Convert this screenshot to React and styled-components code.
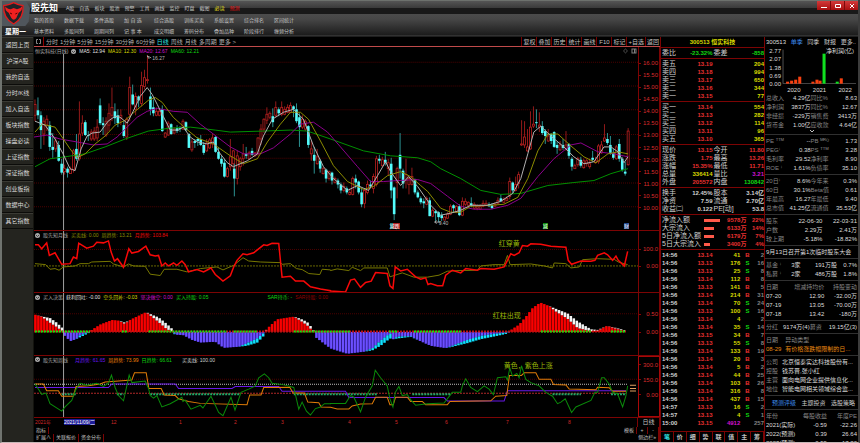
import React, { useState } from "react";
import styled, { createGlobalStyle } from "styled-components";

const GlobalStyle = createGlobalStyle`
  * {
    box-sizing: border-box;
  }

  body {
    margin: 0;
    background: #000000;
    color: #c0c0c0;
    font-family: "Liberation Sans", "Noto Sans CJK SC", sans-serif;
    font-size: 6px;
    line-height: 8px;
  }

  button {
    font: inherit;
    color: inherit;
    background: none;
    border: none;
    padding: 0;
    cursor: pointer;
    white-space: nowrap;
  }
`;

const Page = styled.div`
  height: 100vh;
  display: flex;
  flex-direction: column;
  overflow: hidden;
  border-left: 2px solid #70746f;
  border-right: 2px solid #3c3c3c;
  border-bottom: 1px solid #c8b8b8;
`;

const Header = styled.header`
  height: 37px;
  flex: none;
  display: flex;
  border-top: 1px solid #6d716d;
  background: linear-gradient(#555555 0, #3a3a3a 7px, #191919 7px, #191919 13px, #4c4c4c 13px, #474747 18px, #1c1c1c 34px, #3a3a3a 34px, #161616 36px);
`;

const Brand = styled.div`
  width: 32px;
  display: flex;
  flex-direction: column;
  justify-content: space-between;

  svg {
    display: block;
    width: 28px;
    height: 25px;
  }

  b {
    font-size: 7px;
    line-height: 11px;
    padding-left: 3px;
    color: #ffffff;
  }
`;

const Menus = styled.div`
  flex: 1;
`;

const MainMenu = styled.nav`
  display: flex;
  align-items: center;
  gap: 5px;
  height: 13px;
  font-size: 5px;

  h1 {
    margin: 0 3px 0 -3px;
    font-size: 9px;
    color: #ffffff;
    white-space: nowrap;
  }
`;

const MenuItem = styled.button`
  color: ${({ color }) => color || "#c8c8c8"};
`;

const SubMenu = styled.nav`
  display: grid;
  grid-template-columns: repeat(9, 30px);
  grid-auto-rows: 11px;
  font-size: 5px;
  color: #c4c4c4;

  button {
    text-align: left;
    white-space: pre;
  }
`;

const WindowButtons = styled.div`
  display: flex;
  height: 9px;
  margin-right: -1px;

  button {
    width: 14px;
    height: 9px;
    background: linear-gradient(#d23a3a, #a80f0f);
    border-right: 1px solid #7c0a0a;
    display: flex;
    align-items: center;
    justify-content: center;
  }
`;

const Body = styled.div`
  flex: 1;
  min-height: 0;
  display: flex;
`;

const Sidebar = styled.nav`
  width: 32px;
  flex: none;
  background: #24241f;
  display: flex;
  flex-direction: column;
  border-right: 1px solid #14140f;

  button {
    height: 16px;
    flex: none;
    color: #d8d8d8;
    border-top: 1px solid #3a3a34;
    border-bottom: 1px solid #0c0c0a;
  }
`;

const ChartColumn = styled.main`
  flex: 1;
  min-width: 0;
  display: flex;
  flex-direction: column;
  font-size: 5px;
`;

const Toolbar = styled.div`
  height: 10px;
  flex: none;
  display: flex;
  align-items: center;
  justify-content: space-between;
  border-bottom: 1px solid #c04a4a;
  font-size: 6px;
`;

const Periods = styled.div`
  display: flex;
  align-items: center;
  gap: 2px;
  padding-left: 2px;

  svg {
    width: 5px;
    height: 5px;
  }

  i {
    width: 1px;
    height: 9px;
    background: #900000;
  }
`;

const Period = styled.button`
  color: ${({ $active }) => ($active ? "#30e0e0" : "#b0b0b0")};
`;

const Tools = styled.div`
  display: flex;

  button {
    min-width: 15px;
    padding: 0 1px;
    height: 9px;
    border-left: 1px solid #780000;
  }
`;

const Panel = styled.section`
  flex: ${({ $grow }) => $grow} 1 0;
  min-height: 0;
  display: grid;
  grid-template-columns: 1fr 22px;
  grid-template-rows: 100%;
  border-bottom: 1px solid #7c0404;
`;

const Plot = styled.div`
  position: relative;
  min-height: 0;

  > svg {
    display: block;
    width: 100%;
    height: 100%;
  }
`;

const Legend = styled.div`
  position: absolute;
  top: 0;
  left: 1px;
  display: flex;
  align-items: center;
  gap: 3px;
  white-space: nowrap;

  svg {
    width: 5px;
    height: 5px;
  }
`;

const LegendText = styled.span`
  color: ${({ color }) => color};
  padding-left: ${({ $space }) => $space || 0}px;
`;

const Mark = styled.span`
  position: absolute;
  left: ${({ $left }) => $left}%;
  top: ${({ $top }) => $top}%;
  color: ${({ color }) => color || "#b8b8b8"};
  background: ${({ $bg }) => $bg || "none"};
  font-size: ${({ $size }) => $size || 5}px;
  line-height: ${({ $bg }) => ($bg ? 6 : 8)}px;
  white-space: nowrap;
`;

const Scale = styled.div`
  display: flex;
  flex-direction: column;
  justify-content: ${({ $gap }) => ($gap ? "flex-start" : "space-between")};
  gap: ${({ $gap }) => $gap || 0}px;
  padding: ${({ $top }) => $top}px 1px 19px 0;
  border-left: 1px solid #7c0404;
  border-right: 1px solid #7c0404;
  outline: ${({ $selected }) => ($selected ? "1px solid #a80808" : "none")};
  outline-offset: -1px;
  color: #d82c2c;
  font-size: 6px;
  line-height: 6px;

  span {
    display: flex;
    align-items: center;
    justify-content: space-between;
  }

  span::before {
    content: "";
    width: 2px;
    height: 1px;
    background: #900000;
  }
`;

const FooterRow = styled.div`
  height: ${({ $height }) => $height}px;
  flex: none;
  display: flex;
  justify-content: space-between;
  line-height: 7px;
  border-right: 1px solid #7c0404;
`;

const Timeline = styled.div`
  flex: 1;
  position: relative;
`;

const PeriodName = styled.span`
  width: 22px;
  font-size: 6px;
  line-height: 8px;
  text-align: center;
  border-left: 1px solid #7c0404;
`;

const FooterGroup = styled.div`
  display: flex;

  button {
    padding: 0 2px;
    border-right: 1px solid #7c0404;
    min-width: ${({ $min }) => $min || 0}px;
  }
`;

const Quote = styled.aside`
  width: 105px;
  flex: none;
  display: flex;
  flex-direction: column;
  font-weight: bold;
  border-left: 1px solid #7c0404;
  border-right: 1px solid #7c0404;

  h2 {
    margin: 0;
    height: 11px;
    font-size: 6px;
    line-height: 11px;
    color: #d8d800;
    text-align: center;
    border-bottom: 1px solid #7c0404;
  }
`;

const Block = styled.div`
  padding: 1px 0;
  border-bottom: 1px solid #7c0404;
  flex: ${({ $fill }) => ($fill ? "1" : "none")};
`;

const Table = styled.table`
  width: 100%;
  border-collapse: collapse;
  table-layout: fixed;

  td,
  th {
    height: ${({ $row }) => $row || 8}px;
    padding: 0;
    line-height: ${({ $row }) => $row || 8}px;
    text-align: right;
    white-space: nowrap;
    font-weight: inherit;
  }
`;

const Cell = styled.td`
  && {
    color: ${({ color }) => color || "#d0d0d0"};
    text-align: ${({ $left }) => ($left ? "left" : "right")};
    font-size: ${({ $label }) => ($label ? 7 : 6)}px;
    font-weight: ${({ $label }) => ($label ? "normal" : "inherit")};
    padding-left: ${({ $left }) => ($left ? 1 : 0)}px;
  }
`;

const FlowBar = styled.div`
  height: 3px;
  margin-left: 2px;
  background: #ff5a4a;
`;

const QuoteTabs = styled.div`
  height: 10px;
  display: grid;
  grid-template-columns: repeat(8, 1fr);

  button {
    border-right: 1px solid #7c0404;
  }

  button:first-child {
    color: #30e0e0;
  }
`;

const Info = styled.aside`
  width: 93px;
  flex: none;
  overflow: hidden;
  color: #dcdcdc;
`;

const InfoTabs = styled.div`
  display: flex;
  justify-content: space-between;
  height: 10px;
  line-height: 10px;
  padding: 0 2px 0 1px;
`;

const InfoTab = styled.button`
  color: ${({ $active }) => ($active ? "#3c8ae8" : "#c8c8c8")};
`;

const Profit = styled.div`
  display: grid;
  grid-template-columns: 16px 1fr;
  height: 45px;
  position: relative;
  line-height: 6px;

  > svg {
    width: 100%;
    height: 37px;
    display: block;
  }

  em {
    position: absolute;
    top: 1px;
    right: 4px;
    font-style: normal;
  }
`;

const ProfitScale = styled.div`
  display: flex;
  flex-direction: column;
  justify-content: space-between;
  text-align: right;
  height: 40px;
  padding-top: 1px;
`;

const Years = styled.div`
  grid-column: 2;
  display: flex;
  justify-content: space-around;
  font-size: 6px;
`;

const InfoBlock = styled.div`
  padding: 2px 1px 1px 1px;
  border-bottom: 1px solid #303030;
  line-height: 9px;

  p {
    margin: 0;
    white-space: nowrap;
  }
`;

const InfoRow = styled.tr`
  td {
    color: ${({ color }) => color || "#dcdcdc"};
  }

  && th {
    color: #848484;
    text-align: ${({ $head }) => ($head ? "right" : "left")};
  }

  && > :first-child {
    text-align: left;
  }
`;

const Fact = styled.p`
  color: ${({ color }) => color || "#dcdcdc"};

  span {
    color: ${({ color }) => color || "#848484"};
    margin-right: 4px;
  }
`;

const More = styled.button`
  && {
    display: block;
    width: 100%;
    height: 3px;
    line-height: 3px;
  }

  svg {
    display: block;
    margin: 0 auto;
  }
`;

const RED = "#e83030";
const GREEN = "#10d810";
const YELLOW = "#d8d800";
const PINK = "#d010d0";
const PITCH = 2.955;

// Each candle: direction, high, body top, body bottom, low
const candleRuns = [
  {
    x: 35,
    data: "r100,105,116,122 c98,111,116,120 c112,116,131,150 r118,122,135,146 r116,120,126,132 c122,126,148,152 c134,148,151,159 r138,142,150,153 c142,146,162,163 c160,165,174,176 r166,170,173,176 c168,170,174,179 r168,171,175,175 r150,152,171,174 c135,150,160,162 r102,135,160,162 r116,124,134,137 c121,123,136,137 c132,136,137,142 r130,133,140,142 r128,132,140,142 r120,128,139,142 c99,106,124,126 c118,124,126,136 r118,122,136,138 r104,114,126,132 r88,108,116,122 c104,112,119,125 c110,116,124,128 r110,116,119,126 c122,126,137,139 r118,120,138,141 r77,88,115,122 c85,95,105,106 r93,97,110,116 c96,97,101,108 r72,86,104,107 r70,78,87,90 r55,80,81,84 c88,97,110,116 c100,108,114,117 r108,112,116,117 r109,112,116,117 c106,110,132,133 r133,134,138,139 r122,124,136,137 c124,125,135,136 r128,130,134,135 c126,129,132,134 c127,129,130,133 r120,122,130,131 c122,123,131,132 c134,135,149,149 r140,143,151,153 c140,142,144,149 c138,140,142,147 c136,140,146,147 c143,146,154,156 r140,144,152,153 r139,141,149,150 r135,139,145,149 c137,138,153,154 c148,153,160,161 c157,160,165,168 c160,164,178,179 r168,170,178,179 r140,158,168,172 r151,152,165,174",
  },
  {
    x: 234,
    data: "c165,170,180,198 r152,157,180,186 r158,160,168,172 r145,155,160,167 c148,155,157,160 r152,154,160,161 c149,152,156,157 r153,154,157,158 r138,139,155,157 r125,130,140,146 r119,120,130,134 r108,115,121,125 r112,114,118,120 c109,117,123,128 r102,108,116,118 c108,110,114,117 r102,108,115,117 r107,110,115,116 r105,108,113,114 r103,106,113,114 c106,107,110,118 c104,110,122,124 c114,118,128,148 r116,120,128,130 r120,122,130,132 c126,127,146,149 r142,150,155,162 c148,156,162,175 r150,158,165,166 c160,162,170,174 r168,170,175,176 c170,171,180,184 r172,173,180,182 c173,174,182,186 r178,180,184,185 c180,182,186,190 c184,186,192,195 r184,188,192,194 c188,190,194,196 r190,194,196,197 r178,180,196,197 c176,180,184,190 c182,183,194,196 c190,194,206,209 r190,192,205,210 r182,186,194,196 c182,186,188,190 r175,178,190,195 r157,160,186,188 c156,160,162,165 r158,161,167,168 c153,161,164,167 r160,164,170,177 c159,165,192,200 c188,189,216,222 r168,170,184,200 c134,156,170,180 c170,172,185,190 r160,176,182,190 r178,180,186,196 r169,178,186,187 c180,181,194,196 c192,194,199,200 c198,200,204,206 c200,203,205,210 r198,200,206,207 c199,202,218,218 r210,212,218,219 c212,213,215,223 c213,214,219,224",
  },
  {
    x: 441,
    data: "c214,217,220,223 r218,219,222,222 r214,216,220,221 r206,208,216,217 c206,207,210,214 r207,208,214,215 c206,208,217,218 r199,203,217,218 r200,203,206,208 r203,204,207,208 c199,205,207,209 r204,206,210,211 r206,208,210,212 r206,208,211,211 r202,205,208,209 r202,205,207,208 c204,206,208,209 c205,207,210,211 r204,206,208,209 r199,202,205,206 c196,200,203,204 r199,201,204,205 r198,200,202,203 r179,183,198,201 c183,184,192,195 r178,186,192,193 r173,176,185,190 r121,145,146,147 r122,138,146,149 r130,148,152,153 r112,128,150,151 r107,125,127,129 c110,123,124,129 r113,126,128,133 c122,127,134,136 c130,132,137,145 r130,137,142,143 c134,135,142,145 c132,133,148,149 c143,146,149,155 r142,146,151,152 c140,146,149,151 r132,146,150,152 c144,145,157,160 c158,160,168,172 r165,167,170,170 r158,160,166,168 c158,161,167,169 r160,162,169,170 r160,162,165,168 r160,165,168,170 c152,159,161,163 r158,162,164,165 r145,147,163,165 r142,146,154,155 r125,139,142,143 c134,140,144,146 c137,146,154,156 c150,154,159,161 r146,148,160,161 c140,145,160,163 c158,160,171,173 c163,173,175,177 r129,132,166,167",
  },
];

const candles = candleRuns.flatMap(({ x, data }) =>
  data.split(" ").map((item, i) => {
    const [high, top, bottom, low] = item.slice(1).split(",").map(Number);
    return { x: x + i * PITCH, up: item[0] === "r", high, top, bottom, low };
  })
);

const averages = [
  ["#009000", "35,168 50,160 65,158 85,155 105,148 125,140 148,132 170,129 190,128 215,131 230,133 262,132 290,131 307,132 330,140 363,152 390,157 417,159 430,163 440,170 460,180 480,192 500,196 520,195 547,187 573,184 593,182 610,175 627,170"],
  ["#8c008c", "34,138 47,136 60,140 77,143 93,146 107,145 117,138 127,128 137,118 147,112 157,109 173,112 187,113 200,125 217,138 230,148 243,155 260,155 273,149 290,135 300,125 313,123 327,133 340,148 357,168 370,183 383,183 397,182 417,181 430,185 447,198 460,208 473,211 490,211 507,207 520,200 537,178 553,160 570,146 580,144 597,153 613,155 627,158"],
  ["#8c8c00", "35,133 42,125 55,128 62,138 70,150 77,159 85,155 95,145 105,137 115,126 125,121 135,112 148,101 155,98 162,103 173,118 185,129 197,139 213,145 230,157 243,165 257,160 267,143 280,125 290,113 300,113 308,120 320,142 333,167 347,183 363,191 373,188 387,177 400,173 410,178 420,187 427,193 440,210 450,214 460,214 470,208 490,207 503,206 517,199 527,180 537,152 547,135 557,135 570,147 583,158 595,164 607,155 617,153 627,155"],
  ["#b0b0b0", "35,122 45,126 55,140 63,155 70,170 75,172 81,150 87,137 92,134 100,133 108,122 115,117 120,118 127,124 133,112 140,97 147,88 152,95 157,105 163,117 170,131 178,131 183,128 190,138 197,143 207,145 213,143 220,155 227,164 233,168 247,162 257,155 263,137 272,120 283,113 293,110 303,120 313,147 323,168 333,180 347,192 357,187 368,192 377,177 385,163 390,173 400,187 408,178 417,188 430,207 440,217 450,215 460,212 470,207 487,207 500,203 512,195 520,180 527,155 533,133 540,127 550,137 563,148 573,158 583,165 593,163 603,148 610,148 617,153 623,164 627,158"],
];

// Indicator series come in two halves, the second one starts at 990
const join = (first, second) =>
  first +
  " " +
  second
    .split(" ")
    .map((p) => {
      const [x, y] = p.split(",");
      return `${Number(x) + 990},${y}`;
    })
    .join(" ");

const monthRed = join(
  "105,48 115,48 125,60 140,42 148,80 165,72 175,90 185,107 210,105 220,85 230,90 236,43 260,58 280,52 290,40 310,42 325,36 333,70 343,97 352,90 370,116 386,60 395,73 415,68 437,52 450,78 465,82 475,80 485,112 495,103 505,112 520,103 530,110 545,97 555,108 565,130 590,123 610,130 625,122 632,118 645,138 657,148 668,158 690,142 700,115 710,95 728,75 740,78 760,72 790,48 800,50 815,43 835,44 845,146 870,143 885,158 910,158 930,175 960,182 990,187",
  "0,188 45,191 60,155 72,152 90,177 105,162 122,158 135,132 170,135 178,172 187,180 194,115 210,127 230,122 255,145 270,152 285,148 292,168 300,165 320,172 336,172 345,140 365,125 390,133 405,120 440,125 450,120 490,122 520,115 530,95 540,75 550,80 565,72 575,50 590,52 600,45 630,46 660,52 705,55 712,95 722,107 750,97 780,98 792,95 800,80 820,72 830,78 845,95 855,82 862,95 880,112 890,68"
);

const monthYellow = join(
  "105,105 137,108 150,122 165,120 177,125 190,115 225,112 240,105 265,105 275,100 330,98 340,106 370,115 385,106 400,112 435,113 450,137 480,141 492,122 530,122 560,130 600,120 650,115 668,124 700,110 728,87 745,97 780,100 840,102 845,107 870,105 888,120 905,123 925,135 958,138 965,122 990,124",
  "0,126 20,121 55,126 65,116 90,126 100,118 170,118 178,145 215,133 250,146 290,146 325,140 350,128 385,126 440,125 450,112 490,108 520,108 530,80 538,108 600,106 640,112 665,118 670,103 705,105 720,118 745,115 755,93 800,90 850,92 862,100 890,108"
);

const weekOrange = join(
  "105,464 130,464 140,485 175,485 185,502 220,502 228,472 265,470 300,464 315,458 395,452 403,430 438,430 446,478 483,478 492,498 525,500 535,510 565,518 600,524 740,528 748,498 782,498 790,475 868,474 878,492 912,492 922,520 955,522 962,535 990,536",
  "0,536 20,541 55,541 65,532 90,526 125,525 135,505 170,505 178,528 188,528 195,505 230,505 240,518 275,518 285,528 350,528 358,518 480,516 495,502 528,500 536,438 572,438 580,430 615,430 625,450 660,450 668,466 705,467 715,480 795,482 800,474 835,476 845,487 885,487"
);

const weekPurple = join(
  "105,475 325,475 335,464 525,464 535,478 695,478 705,472 835,472 845,487 990,487",
  "0,487 45,487 55,506 340,506 350,517 520,517 530,485 885,485"
);

const weekGreen = join(
  "105,464 115,480 125,496 138,492 150,525 185,548 195,535 215,515 228,480 240,462 260,468 290,462 310,472 325,462 334,437 345,475 355,500 370,516 380,470 387,437 395,460 435,455 445,478 450,500 460,508 470,500 485,535 510,525 545,505 548,518 555,514 572,542 600,530 608,538 632,502 645,530 655,552 668,562 692,505 704,545 722,490 745,480 765,470 775,445 792,433 805,445 815,462 850,467 880,475 895,542 905,520 918,548 930,560 945,540 960,535 972,525 990,525",
  "0,524 45,524 60,500 70,505 90,550 105,505 125,470 134,422 150,445 170,470 178,510 187,535 194,490 205,472 215,500 230,497 242,515 255,530 290,525 340,523 365,490 390,490 395,470 405,448 420,475 440,488 460,470 475,480 488,497 500,445 525,442 530,452 537,415 545,440 558,432 565,445 572,408 585,450 600,460 625,470 645,490 665,502 680,525 690,520 703,510 722,552 735,535 780,515 792,490 800,490 812,445 820,445 835,465 845,490 860,495 875,535 885,500 890,470"
);

// x, body height, tip height (negative below the zero line)
const waves = [
  [105, 52, 52], [125, 46, 47], [150, 28, 42], [170, 15, 28], [187, 2, 12], [193, -10, -10], [210, -28, -28],
  [228, -22, -22], [240, -10, -16], [265, -1, -4], [275, 6, 6], [300, 22, 22], [335, 36, 36], [355, 34, 34],
  [375, 24, 28], [385, 34, 34], [438, 60, 60], [455, 46, 52], [475, 30, 44], [500, 8, 24], [518, 1, 7],
  [525, -8, -8], [550, -10, -10], [575, -24, -24], [600, -32, -32], [645, -30, -30], [670, -48, -48],
  [715, -45, -45], [740, -34, -42], [770, -20, -33], [792, -2, -10], [798, 8, 8], [830, 38, 38], [880, 46, 46],
  [900, 34, 40], [920, 20, 30], [938, 2, 8], [945, -16, -16], [990, -50, -50], [1040, -66, -66],
  [1090, -60, -60], [1115, -50, -56], [1140, -26, -42], [1168, -4, -20], [1178, -22, -22], [1190, -14, -20],
  [1230, -13, -15], [1255, -26, -26], [1290, -42, -42], [1335, -49, -49], [1355, -42, -45], [1400, -24, -34],
  [1440, -12, -22], [1480, -6, -14], [1520, -1, -5], [1528, 4, 4], [1555, 22, 22], [1575, 46, 46],
  [1595, 72, 72], [1618, 89, 89], [1645, 78, 78], [1665, 62, 70], [1700, 40, 56], [1730, 12, 32],
  [1770, 2, 8], [1790, 4, 6], [1818, 18, 18], [1845, 10, 12], [1875, 2, 4],
];

const greenDots = [[105, 270], [365, 380], [445, 680], [700, 770], [880, 1050], [1165, 1190], [1240, 1380], [1620, 1770], [1830, 1875]];

const bars = [];
for (let x = 106; x < 1876; x += 8.86) {
  let k = waves.findIndex((w) => w[0] > x);
  if (k < 1) k = k === 0 ? 1 : waves.length - 1;
  const [x0, b0, t0] = waves[k - 1];
  const [x1, b1, t1] = waves[k];
  const f = (x - x0) / (x1 - x0);
  bars.push({ x, body: b0 + (b1 - b0) * f, tip: t0 + (t1 - t0) * f });
}

const Line = ({ points, color, width = 1 }) => (
  <polyline points={points} fill="none" stroke={color} strokeWidth={width} vectorEffect="non-scaling-stroke" />
);

const Level = ({ y, color, dash = "1 1", from = 102, to = 1911, width = 1 }) => (
  <path d={`M${from} ${y}H${to}`} stroke={color} strokeWidth={width} strokeDasharray={dash} vectorEffect="non-scaling-stroke" />
);

const Cursor = () => <path d="M190.5 0V600" stroke="#a0a0a0" vectorEffect="non-scaling-stroke" />;

const Dot = () => (
  <svg viewBox="0 0 10 10">
    <circle cx="5" cy="5" r="5" fill="#a8a8a8" />
    <path d="M2 4l3 3 3-3" stroke="#202020" strokeWidth="1.5" fill="none" />
  </svg>
);

const PriceChart = () => (
  <svg viewBox="34 47 603 185" preserveAspectRatio="none">
    {[63, 87, 111, 136, 160, 185, 209].map((y) => (
      <path key={y} d={`M34 ${y - 0.5}H637`} stroke="#4c0000" strokeDasharray="1 1" />
    ))}
    <path d="M63.5 54V232" stroke="#a0a0a0" />
    {candles.map((c) =>
      c.up ? (
        <g key={c.x} stroke="#b82020" strokeWidth="0.8" fill="#000000">
          <path d={`M${c.x} ${c.high}V${c.low}`} />
          <rect x={c.x - 1} y={c.top} width="2" height={Math.max(c.bottom - c.top, 0.5)} />
        </g>
      ) : (
        <g key={c.x} fill="#54fcfc">
          <path d={`M${c.x} ${c.high}V${c.low}`} stroke="#38b8b8" strokeWidth="0.8" />
          <rect x={c.x - 1.3} y={c.top} width="2.6" height={Math.max(c.bottom - c.top, 1)} />
        </g>
      )
    )}
    {averages.map(([color, points]) => (
      <Line key={color} color={color} points={points} />
    ))}
    <path d="M147 56l4 2M147 56l2 3M434 224h6M434 224l2 -1.500M434 224l2 1.500" stroke="#c0c0c0" fill="none" strokeWidth="0.8" />
    <path d="M624.500 49l2 2-2 2-2-2z" stroke="#707070" fill="none" strokeWidth="0.7" />
    <path d="M631 49h4v4h-4zM633.500 49v4" stroke="#808080" fill="none" />
  </svg>
);

const WaveChart = () => (
  <svg viewBox="102 192 1809 186" preserveAspectRatio="none">
    <Level y={255} color="#4c0000" />
    {bars.map(({ x, body, tip }) => {
      const up = tip > 0;
      const bodyY = up ? 310 - body : 310;
      const tipY = up ? 310 - tip : 310 - body;
      return (
        <g key={x}>
          <rect x={x - 4} y={bodyY} width="8.800" height={Math.abs(body)} fill={up ? "#a00000" : "#3a22b0"} />
          <rect x={x - 3} y={bodyY} width="6" height={Math.abs(body)} fill={up ? "#fa0000" : "#6c50ff"} />
          <rect x={x - 3.5} y={tipY} width="7.500" height={Math.abs(tip - body)} fill={up ? "#f4f4f4" : "#10e0ff"} />
        </g>
      );
    })}
    <Level y={309} color="#c01010" dash="2 1" to={1875} width={2} />
    {greenDots.map(([from, to]) => (
      <Level key={from} y={309} color="#10e810" dash="2 1" from={from} to={to} width={2} />
    ))}
    <Cursor />
  </svg>
);

const at = (px) => ((px - 34) / 603) * 100;

const sections = [
  "返回上页", "沪深A股", "我的自选", "分时/K线", "加入自选", "板块指数",
  "操盘必读", "上证指数", "深证指数", "创业板指", "数据中心", "其它指数",
];
const mainMenu = ["A股", "自选", "板块", "股池", "预警", "工具", "画线", "监控", "盯盘", "截图"];
const subMenu = [
  "我的首页", "数据下载", "条件选股", "加 自 选", "综合选股", "训练买卖", "系统设置", "综合排名", "区间统计",
  "基本资料", "多股同列", "周期同列", "记 事 本", "成交明细", "筹码分布", "叠加品种", "阶段排行", "缠频分析",
];
const periods = ["分时", "1分钟", "5分钟", "15分钟", "30分钟", "60分钟", "日线", "周线", "月线", "多周期", "更多 >"];
const tools = ["复权", "叠加", "历史", "统计", "画线", "F10", "标记", "+自选", "返回"];
const months = [["12", 111], ["1", 179], ["2", 234], ["3", 281], ["4", 348], ["5", 395], ["6", 445], ["7", 506], ["8", 568]];

const sells = [["卖五", "13.19", 204], ["卖四", "13.18", 994], ["卖三", "13.17", 650], ["卖二", "13.16", 344], ["卖一", "13.15", 77]];
const buys = [["买一", "13.14", 554], ["买二", "13.13", 282], ["买三", "13.12", 114], ["买四", "13.11", 96], ["买五", "13.10", 365]];
const prices = [
  ["现价", "13.15", "今开", "11.80", RED, RED],
  ["涨跌", "1.75", "最高", "13.26", RED, RED],
  ["涨幅", "15.35%", "最低", "11.71", RED, RED],
  ["总量", "336414", "量比", "3.21", YELLOW, PINK],
  ["外盘", "205572", "内盘", "130842", RED, GREEN],
];
const shares = [
  ["换手", "12.45%", "股本", "3.14亿"],
  ["净资", "7.59", "流通", "2.70亿"],
  ["收益㈡", "0.122", "PE[动]", "53.8"],
];
const flows = [
  ["净流入额", 78, "9578万", "22%"],
  ["大宗流入", 50, "6133万", "14%"],
  ["5日净流入额", 50, "6179万", "7%"],
  ["5日大宗流入", 30, "3400万", "4%"],
];
const ticks = [
  ["14:56", "13.14", 41, "B", 2], ["14:56", "13.13", 176, "S", 16], ["14:56", "13.13", 25, "S", 8],
  ["14:56", "13.14", 112, "B", 8], ["14:56", "13.13", 141, "B", 5], ["14:56", "13.14", 214, "B", 31],
  ["14:56", "13.14", 70, "S", 24], ["14:56", "13.13", 100, "S", 16], ["14:56", "13.14", 4, "", 2],
  ["14:56", "13.14", 35, "S", 14], ["14:56", "13.15", 34, "B", 7], ["14:56", "13.13", 55, "S", 8],
  ["14:56", "13.14", 133, "B", 19], ["14:56", "13.14", 20, "B", 3], ["14:56", "13.14", 5, "B", 2],
  ["14:56", "13.14", 44, "B", 25], ["14:56", "13.14", 103, "B", 26], ["14:56", "13.14", 316, "B", 8],
  ["14:56", "13.14", 437, "B", 15], ["14:57", "13.13", 16, "S", 2], ["14:57", "13.13", 4, "S", 1],
  ["15:00", "13.15", 4912, "", 257],
];

const profits = [
  [3, 6], [7, 9], [11, 12], [15, 21], [28, 6], [32, 12], [35, 9], [39, 90, true], [52, 6, true], [56, 16],
];

const Widths = ({ of }) => (
  <colgroup>
    {of.map((w, i) => (
      <col key={i} width={`${w}%`} />
    ))}
  </colgroup>
);

const PairTable = ({ rows }) => (
  <Table>
    <Widths of={[22, 28, 17, 33]} />
    <tbody>
      {rows.map(([a, av, b, bv, ac, bc]) => (
        <tr key={a}>
          <Cell $label $left>{a}</Cell>
          <Cell color={ac}>{av}</Cell>
          <Cell $label $left>{b}</Cell>
          <Cell color={bc}>{bv}</Cell>
        </tr>
      ))}
    </tbody>
  </Table>
);

const OrderTable = ({ rows }) => (
  <Table>
    <Widths of={[16, 34, 50]} />
    <tbody>
      {rows.map(([name, price, volume]) => (
        <tr key={name}>
          <Cell $label $left>{name}</Cell>
          <Cell color={RED}>{price}</Cell>
          <Cell color={YELLOW}>{volume}</Cell>
        </tr>
      ))}
    </tbody>
  </Table>
);

const FactTable = ({ rows, widths = [22, 27, 22, 29] }) => (
  <Table $row={9}>
    <Widths of={widths} />
    <tbody>
      {rows.map(([a, av, b, bv]) => (
        <InfoRow key={a}>
          <th>{a}</th>
          <td>{av}</td>
          <th>{b}</th>
          <td>{bv}</td>
        </InfoRow>
      ))}
    </tbody>
  </Table>
);

const ListTable = ({ head, rows, widths = [30, 34, 36] }) => (
  <Table $row={9}>
    <Widths of={widths} />
    <tbody>
      {head && (
        <InfoRow $head>
          {head.map((h) => (
            <th key={h}>{h}</th>
          ))}
        </InfoRow>
      )}
      {rows.map((row) => (
        <InfoRow key={row[0]}>
          {row.map((cell, i) => (head || i ? <td key={i}>{cell}</td> : <th key={i}>{cell}</th>))}
        </InfoRow>
      ))}
    </tbody>
  </Table>
);

const App = () => {
  const [period, setPeriod] = useState("日线");

  return (
    <Page>
      <GlobalStyle />
      <Header>
        <Brand>
          <svg viewBox="0 0 84 75">
            <path d="M0 0H72L84 22 80 62 70 75H0z" fill="#50565c" />
            <path d="M5 14Q20 13 35 5Q50 13 63 14Q66 52 35 69Q3 52 5 14z" fill="#202428" stroke="#e01c1c" strokeWidth="4" />
            <path d="M10 16Q14 24 26 25L35 21 45 25Q56 24 60 16Q62 30 50 35L43 51Q35 61 28 51L20 35Q8 30 10 16z" fill="#f02020" />
            <path d="M24 36l6 3M46 36l-6 3" stroke="#500000" strokeWidth="3" />
          </svg>
          <b>星期一</b>
        </Brand>
        <Menus>
          <MainMenu>
            <h1>股先知</h1>
            {mainMenu.map((item) => (
              <MenuItem key={item}>{item}</MenuItem>
            ))}
            <MenuItem color="#f0e020">必读</MenuItem>
            <MenuItem color="#e01010">预测</MenuItem>
          </MainMenu>
          <SubMenu>
            {subMenu.map((item) => (
              <button key={item}>{item}</button>
            ))}
          </SubMenu>
        </Menus>
        <WindowButtons>
          <button aria-label="最小化">
            <svg width="6" height="6" viewBox="0 0 6 6"><path d="M0 4.500h6" stroke="#fff" /></svg>
          </button>
          <button aria-label="还原">
            <svg width="6" height="6" viewBox="0 0 6 6"><path d="M.5 1.500h5v3h-5z" stroke="#fff" fill="none" /></svg>
          </button>
          <button aria-label="关闭">
            <svg width="6" height="6" viewBox="0 0 6 6"><path d="M1 1l4 4M5 1l-4 4" stroke="#fff" /></svg>
          </button>
        </WindowButtons>
      </Header>

      <Body>
        <Sidebar>
          {sections.map((item) => (
            <button key={item}>{item}</button>
          ))}
        </Sidebar>

        <ChartColumn>
          <Toolbar>
            <Periods>
              <svg viewBox="0 0 10 10"><path d="M4 1H1V9H4M6 1H9V9H6" stroke="#b0b0b0" strokeWidth="1.5" fill="none" /></svg>
              <i />
              {periods.map((item) => (
                <Period key={item} $active={item === period} onClick={() => setPeriod(item)}>
                  {item}
                </Period>
              ))}
            </Periods>
            <Tools>
              {tools.map((item) => (
                <button key={item}>{item}</button>
              ))}
            </Tools>
          </Toolbar>

          <Panel $grow={185}>
            <Plot>
              <PriceChart />
              <Legend>
                <LegendText color="#b0b0b0">恒实科技(日线)</LegendText>
                <Dot />
                <LegendText color="#e0e0e0">MA5: 12.94</LegendText>
                <LegendText color={YELLOW}>MA10: 12.30</LegendText>
                <LegendText color={PINK}>MA20: 12.67</LegendText>
                <LegendText color={GREEN}>MA60: 12.21</LegendText>
              </Legend>
              <Mark $left={at(152)} $top={4}>16.27</Mark>
              <Mark $left={at(438)} $top={94}>9.40</Mark>
              <Mark $left={at(389)} $top={96} $bg="linear-gradient(90deg, #208080 50%, #b02020 50%)" color="#ffffff">减</Mark>
              <Mark $left={at(394)} $top={96} $bg="#a82020" color="#ffffff">跌</Mark>
              <Mark $left={at(542)} $top={96} $bg="#109010" color="#ffffff">减</Mark>
              <Mark $left={at(623)} $top={96} $bg="#204890" color="#ffffff">财</Mark>
            </Plot>
            <Scale $top={13}>
              {Array.from({ length: 13 }, (_, i) => (
                <span key={i}>{(16 - i / 2).toFixed(2)}</span>
              ))}
            </Scale>
          </Panel>

          <Panel $grow={62}>
            <Plot>
              <svg viewBox="102 6 1809 186" preserveAspectRatio="none">
                <Level y={62} color="#4c0000" />
                <Level y={112} color="#686800" dash="2 1" />
                <Cursor />
                <Line points={monthYellow} color="#787800" />
                <Line points={monthRed} color="#f80808" width={1.5} />
              </svg>
              <Legend>
                <Dot />
                <LegendText color="#a0a0a0">股先知月线</LegendText>
                <LegendText color="#8c8c00">买卖线: 0.00</LegendText>
                <LegendText color="#8c8c00">周趋势: 13.21</LegendText>
                <LegendText color="#f00808">月趋势: 103.84</LegendText>
              </Legend>
              <Mark $left={at(498)} $top={15} $size={7} color="#98b808">红穿黄</Mark>
            </Plot>
            <Scale $top={15} $gap={11}>
              <span>100.0</span>
              <span>0.00</span>
            </Scale>
          </Panel>

          <Panel $grow={62}>
            <Plot>
              <WaveChart />
              <Legend>
                <Dot />
                <LegendText color="#a0a0a0">买入决策</LegendText>
                <LegendText color="#e0e0e0">获利回吐: -0.00</LegendText>
                <LegendText color={YELLOW}>空头回补: -0.03</LegendText>
                <LegendText color={PINK}>坚决做空: 0.00</LegendText>
                <LegendText color={GREEN}>买入持股: 0.05</LegendText>
                <LegendText color={GREEN} $space={56}>SAR持币: -</LegendText>
                <LegendText color="#900000">SAR持股: 0.00</LegendText>
              </Legend>
              <Mark $left={at(492)} $top={30} $size={7} color="#98b808">红柱出现</Mark>
            </Plot>
            <Scale $top={18} $gap={12}>
              <span>0.50</span>
              <span>0.00</span>
            </Scale>
          </Panel>

          <Panel $grow={62}>
            <Plot>
              <svg viewBox="102 378 1809 189" preserveAspectRatio="none">
                <Level y={450} color="#4c0000" />
                <Level y={465} color="#c0c0c0" dash="1 1" to={1880} />
                <Level y={493} color="#b02828" dash="2 1" to={1875} />
                {[[185, 230], [350, 370], [450, 720], [880, 1130], [1235, 1350], [1655, 1740], [1830, 1875]].map(([from, to]) => (
                  <Level key={from} y={496} color="#20a868" dash="2 1" from={from} to={to} width={2} />
                ))}
                <Cursor />
                <Line points={weekPurple} color="#6818e8" />
                <Line points={weekOrange} color="#e07c08" />
                <Line points={weekGreen} color="#0a8a0a" />
                <path d="M1887 468h18M1887 478h18M1887 486h18" stroke="#e0a060" vectorEffect="non-scaling-stroke" />
              </svg>
              <Legend>
                <Dot />
                <LegendText color="#a0a0a0">股先知周线</LegendText>
                <LegendText color="#6a18f0" $space={4}>月趋势: 61.65</LegendText>
                <LegendText color="#f08008">周趋势: 73.99</LegendText>
                <LegendText color={GREEN}>日趋势: 66.61</LegendText>
                <LegendText color="#d0d0d0" $space={7}>买卖线: 100.00</LegendText>
              </Legend>
              <Mark $left={at(503)} $top={10} $size={7} color="#98b808">黄色，紫色上涨</Mark>
            </Plot>
            <Scale $top={6} $gap={9} $selected>
              <span>300.0</span>
              <span>150.0</span>
              <span>0.00</span>
            </Scale>
          </Panel>

          <FooterRow $height={9}>
            <Timeline>
              <Mark $left={at(35)} $top={0} color="#d02828">2021年</Mark>
              <Mark $left={at(64)} $top={10} color="#ffffff" $bg="#1c1c98">2021/11/09/二</Mark>
              {months.map(([label, x]) => (
                <Mark key={label} $left={at(x)} $top={0} color="#d02828">{label}</Mark>
              ))}
            </Timeline>
            <PeriodName>日线</PeriodName>
          </FooterRow>
          <FooterRow $height={7}>
            <FooterGroup><button>指标</button></FooterGroup>
            <FooterGroup $min={11}>
              <button>模板</button>
              <button aria-label="放大">+</button>
              <button aria-label="缩小">-</button>
            </FooterGroup>
          </FooterRow>
          <FooterRow $height={8}>
            <FooterGroup>
              <button>扩展∧</button>
              <button>关联报价</button>
              <button>资金分布</button>
            </FooterGroup>
            <FooterGroup><button>侧边栏»</button></FooterGroup>
          </FooterRow>
        </ChartColumn>

        <Quote>
          <h2>300513 恒实科技</h2>
          <Block>
            <PairTable rows={[["委比", "-23.32%", "委差", "-858", GREEN, GREEN]]} />
          </Block>
          <Block><OrderTable rows={sells} /></Block>
          <Block><OrderTable rows={buys} /></Block>
          <Block><PairTable rows={prices} /></Block>
          <Block><PairTable rows={shares} /></Block>
          <Block>
            <Table>
              <Widths of={[40, 20, 23, 17]} />
              <tbody>
                {flows.map(([name, size, amount, share]) => (
                  <tr key={name}>
                    <Cell $label $left>{name}</Cell>
                    <td><FlowBar style={{ width: `${size}%` }} /></td>
                    <Cell color={RED}>{amount}</Cell>
                    <Cell color={RED}>{share}</Cell>
                  </tr>
                ))}
              </tbody>
            </Table>
          </Block>
          <Block $fill>
            <Table>
              <Widths of={[18, 32, 27, 9, 14]} />
              <tbody>
                {ticks.map(([time, price, volume, side, count], i) => (
                  <tr key={i}>
                    <Cell $left>{time}</Cell>
                    <Cell color={RED}>{price}</Cell>
                    <Cell color={side || volume < 10 ? YELLOW : PINK}>{volume}</Cell>
                    <Cell color={side === "B" ? RED : GREEN}>{side}</Cell>
                    <Cell color="#808080">{count}</Cell>
                  </tr>
                ))}
              </tbody>
            </Table>
          </Block>
          <QuoteTabs>
            {["笔", "价", "细", "势", "联", "值", "主", "筹"].map((item) => (
              <button key={item}>{item}</button>
            ))}
          </QuoteTabs>
        </Quote>

        <Info>
          <InfoTabs>
            <span>300513</span>
            <InfoTab $active>单季</InfoTab>
            <InfoTab>同季</InfoTab>
            <InfoTab>财报</InfoTab>
            <InfoTab>更多..</InfoTab>
          </InfoTabs>
          <Profit>
            <ProfitScale>
              <span>2.77</span>
              <span>2.07</span>
              <span>1.38</span>
              <span>0.69</span>
              <span>0.00</span>
            </ProfitScale>
            <svg viewBox="0 0 76 111" preserveAspectRatio="none">
              <path d="M2 8V110H74" stroke="#505050" fill="none" vectorEffect="non-scaling-stroke" />
              {profits.map(([x, h, green]) => (
                <rect key={x} x={x + 2} y={110 - h} width="3" height={h} fill={green ? "#10e020" : "#f84010"} />
              ))}
            </svg>
            <Years>
              <span>2020</span>
              <span>2021</span>
              <span>2022</span>
            </Years>
            <em>净利润(亿)</em>
          </Profit>
          <InfoBlock>
            <FactTable
              rows={[
                ["总收入", "4.29亿", "同比%", "8.63"],
                ["净利润", "3837万", "同比%", "12.67"],
                ["非经损", "-229万", "销售费", "3413万"],
                ["货币金", "1.00亿", "应收款", "4.64亿"],
              ]}
            />
            <More aria-label="展开">
              <svg width="4" height="3" viewBox="0 0 4 3"><path d="M0 0l2 2 2-2" stroke="#c0c0c0" fill="none" /></svg>
            </More>
          </InfoBlock>
          <InfoBlock>
            <FactTable
              rows={[
                ["PE ᵀᵀᴹ", "--", "PB ᴹᴿꟴ", "1.73"],
                ["PEGⁱ", "0.38", "PS ᵀᵀᴹ", "3.28"],
                ["毛利率", "29.52", "净利率", "8.90"],
                ["ROE ⁱ", "1.61%", "负债率", "35.10"],
              ]}
            />
          </InfoBlock>
          <InfoBlock>
            <FactTable
              rows={[
                ["20日ⁱ", "8.6%", "今年来", "0.3%"],
                ["60日", "30.1%", "Beta值", "0.61"],
                ["年最高", "16.27", "年最低", "9.40"],
                ["总市值", "41.25亿", "流通值", "35.53亿"],
              ]}
            />
          </InfoBlock>
          <InfoBlock>
            <ListTable
              widths={[24, 38, 38]}
              rows={[
                ["股东", "22-06-30", "22-03-31"],
                ["户数", "2.29万", "2.41万"],
                ["较上期", "-5.18%", "-18.82%"],
              ]}
            />
          </InfoBlock>
          <InfoBlock>
            <p>9月13日召开第1次临时股东大会</p>
          </InfoBlock>
          <InfoBlock>
            <ListTable
              widths={[20, 18, 40, 22]}
              rows={[
                ["基金 ⁱ", "3家", "191万股", "0.7%"],
                ["私募 ⁱ", "2家", "486万股", "1.8%"],
              ]}
            />
          </InfoBlock>
          <InfoBlock>
            <ListTable
              head={["日期", "增减持均价", "持股变动"]}
              rows={[
                ["07-20", "12.90", "-32.00万"],
                ["07-19", "13.05", "-70.00万"],
                ["07-18", "13.42", "-180万"],
              ]}
            />
          </InfoBlock>
          <InfoBlock>
            <FactTable widths={[15, 33, 15, 37]} rows={[["分红", "9174万(4)", "募资", "19.15亿(3)"]]} />
          </InfoBlock>
          <InfoBlock>
            <Fact color="#848484"><span>日期</span>&nbsp;&nbsp;异动类型</Fact>
            <Fact color="#e88a10"><span>08-29</span>有价格涨跌幅限制的日...</Fact>
          </InfoBlock>
          <InfoBlock>
            <Fact><span>公司</span>北京恒泰实达科技股份有...</Fact>
            <Fact><span>控股</span>钱苏晋,张小红</Fact>
            <Fact><span>主营</span>面向电网企业提供信息化...</Fact>
            <Fact><span>地位</span>智能电网相关领域综合监...</Fact>
          </InfoBlock>
          <InfoBlock>
            <InfoTabs>
              <InfoTab $active>&nbsp;&nbsp;&nbsp;预测评级</InfoTab>
              <InfoTab>主题投资</InfoTab>
              <InfoTab>选股策略</InfoTab>
            </InfoTabs>
          </InfoBlock>
          <InfoBlock>
            <ListTable
              head={["年份", "每股收益", "年度PE"]}
              widths={[35, 32, 33]}
              rows={[
                ["2021(实际)", "-0.59", "-22.26"],
                ["2022(预测)", "0.39", "26.64"],
                ["2023(预测)", "0.59", "17.80"],
              ]}
            />
          </InfoBlock>
        </Info>
      </Body>
    </Page>
  );
};

export default App;
